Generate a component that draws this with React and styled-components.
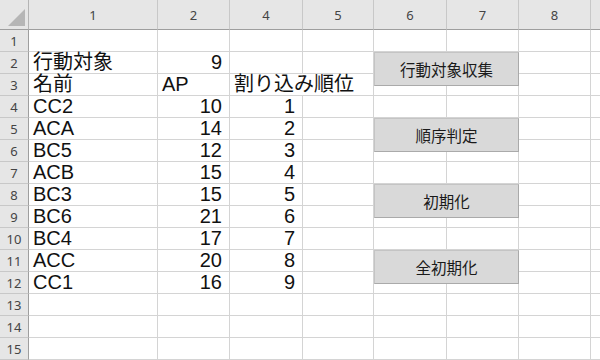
import React from 'react';
import styled, { createGlobalStyle } from 'styled-components';

const GlobalStyle = createGlobalStyle`
  html, body {
    margin: 0;
    padding: 0;
    background: #ffffff;
  }
  body {
    width: 600px;
    height: 360px;
    overflow: hidden;
    font-family: "Noto Sans", "Noto Sans CJK JP", sans-serif;
  }
`;

// column widths, row header first, last column gets cut by the window
const COLS = [29, 129, 72, 73, 71, 73, 72, 72, 40];
const COL_LABELS = ['1', '2', '4', '5', '6', '7', '8', ''];

const Sheet = styled.div`
  position: relative;
  width: 600px;
  height: 360px;
  overflow: hidden;
  background: #ffffff;
`;

const Grid = styled.div`
  display: grid;
  grid-template-columns: ${COLS.map((w) => `${w}px`).join(' ')};
  grid-template-rows: 30px repeat(15, 22px);
`;

const Corner = styled.div`
  position: relative;
  background: #e6e6e6;
  border-right: 1px solid #b4b4b4;
  border-bottom: 1px solid #9e9e9e;
  box-sizing: border-box;

  &::after {
    content: '';
    position: absolute;
    right: 3px;
    bottom: 3px;
    width: 0;
    height: 0;
    border-left: 17px solid transparent;
    border-bottom: 17px solid #b6b6b6;
  }
`;

const ColHead = styled.div`
  display: flex;
  align-items: flex-end;
  justify-content: center;
  padding-bottom: 5px;
  box-sizing: border-box;
  background: #e6e6e6;
  border-right: 1px solid #c8c8c8;
  border-bottom: 1px solid #9e9e9e;
  font-size: 13px;
  color: #444444;
`;

const RowHead = styled.div`
  display: flex;
  align-items: center;
  justify-content: center;
  box-sizing: border-box;
  background: #e6e6e6;
  border-right: 1px solid #9e9e9e;
  border-bottom: 1px solid #c8c8c8;
  font-size: 13px;
  color: #444444;
`;

const Cell = styled.div`
  display: flex;
  align-items: flex-end;
  justify-content: ${(p) => (p.$num ? 'flex-end' : 'flex-start')};
  grid-column: ${(p) => (p.$span ? `span ${p.$span}` : 'auto')};
  box-sizing: border-box;
  padding: 0 ${(p) => (p.$num ? '7px' : '0')} 1px ${(p) => (p.$num ? '0' : '4px')};
  border-right: 1px solid #d4d4d4;
  border-bottom: 1px solid #d4d4d4;
  font-family: "Liberation Sans", "Noto Sans CJK JP", sans-serif;
  font-size: 20px;
  line-height: 20px;
  color: #111111;
  white-space: nowrap;
  overflow: visible;
`;

const MacroButton = styled.div`
  position: absolute;
  left: 374px;
  top: ${(p) => p.$top}px;
  width: 145px;
  height: 34px;
  box-sizing: border-box;
  display: flex;
  align-items: center;
  justify-content: center;
  background: #d9d9d9;
  border: 1px solid #c4c4c4;
  border-right-color: #aaaaaa;
  border-bottom-color: #aaaaaa;
  font-size: 15.5px;
  color: #1a1a1a;
`;

const entries = [
  ['CC2', 10, 1],
  ['ACA', 14, 2],
  ['BC5', 12, 3],
  ['ACB', 15, 4],
  ['BC3', 15, 5],
  ['BC6', 21, 6],
  ['BC4', 17, 7],
  ['ACC', 20, 8],
  ['CC1', 16, 9],
];

// sheet contents keyed by row number, each entry: [text, numeric, span]
function rowCells(r) {
  const blank = COL_LABELS.map(() => null);
  if (r === 2) {
    blank[0] = ['行動対象'];
    blank[1] = [9, true];
  } else if (r === 3) {
    blank[0] = ['名前'];
    blank[1] = ['AP'];
    blank[2] = ['割り込み順位', false, 2];
    blank[3] = 'skip';
  } else if (r >= 4 && r <= 12) {
    const [name, ap, order] = entries[r - 4];
    blank[0] = [name];
    blank[1] = [ap, true];
    blank[2] = [order, true];
  }
  return blank;
}

const buttons = [
  { top: 52, label: '行動対象収集' },
  { top: 118, label: '順序判定' },
  { top: 184, label: '初期化' },
  { top: 250, label: '全初期化' },
];

export default function App() {
  const rows = Array.from({ length: 15 }, (_, i) => i + 1);

  return (
    <>
      <GlobalStyle />
      <Sheet>
        <Grid>
          <Corner />
          {COL_LABELS.map((label, i) => (
            <ColHead key={`h${i}`}>{label}</ColHead>
          ))}

          {rows.map((r) => (
            <React.Fragment key={r}>
              <RowHead>{r}</RowHead>
              {rowCells(r).map((c, i) => {
                if (c === 'skip') return null;
                if (!c) return <Cell key={i} />;
                return (
                  <Cell key={i} $num={c[1]} $span={c[2]}>
                    {c[0]}
                  </Cell>
                );
              })}
            </React.Fragment>
          ))}
        </Grid>

        {buttons.map((b) => (
          <MacroButton key={b.label} $top={b.top}>
            {b.label}
          </MacroButton>
        ))}
      </Sheet>
    </>
  );
}
